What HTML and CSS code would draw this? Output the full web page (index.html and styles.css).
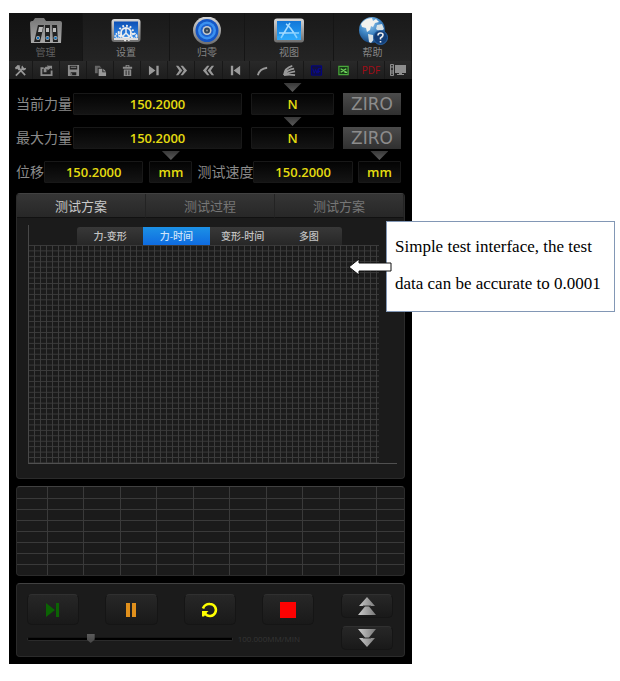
FILE: index.html
```html
<!DOCTYPE html>
<html lang="zh-CN">
<head>
<meta charset="utf-8">
<meta name="viewport" content="width=device-width, initial-scale=1">
<title>测试</title>
<link rel="stylesheet" href="styles.css">
</head>
<body>
<svg class="defs" aria-hidden="true">
  <defs>
    <linearGradient id="metal" x1="0" y1="0" x2="0" y2="1"><stop offset="0" stop-color="#d8d8d8"/><stop offset="1" stop-color="#6d6d6d"/></linearGradient>
    <linearGradient id="folder" x1="0" y1="0" x2="0" y2="1"><stop offset="0" stop-color="#777"/><stop offset="1" stop-color="#a8a8a8"/></linearGradient>
    <linearGradient id="blue" x1="0" y1="0" x2="0" y2="1"><stop offset="0" stop-color="#0b4fb5"/><stop offset="1" stop-color="#3b93ee"/></linearGradient>
    <linearGradient id="sky" x1="0" y1="0" x2="0" y2="1"><stop offset="0" stop-color="#1277d8"/><stop offset="1" stop-color="#25a4fa"/></linearGradient>
    <radialGradient id="globe" cx=".4" cy=".25" r=".8"><stop offset="0" stop-color="#9fd0f2"/><stop offset=".5" stop-color="#3f86c4"/><stop offset="1" stop-color="#123f78"/></radialGradient>
    <linearGradient id="silver" x1="0" y1="0" x2="1" y2="0"><stop offset="0" stop-color="#ccc"/><stop offset="1" stop-color="#777"/></linearGradient>
  </defs>
</svg>
<main class="page">
  <section class="app">
    <nav class="nav">
      <button class="nav-item active" type="button">
        <svg class="nav-icon" viewBox="0 0 34 28"><path d="M1 6q0-2 2-2h1l2-3h9l2 3h14q2 0 2 2l-1 20H2z" fill="url(#folder)"/><g fill="#222"><path d="M9 8h6l-4 17H5z"/><path d="M16 8h5v17h-5zM23 8h5l1 17h-5z"/></g><g fill="#bbb"><path d="M10 10h4l-1 5H9zM17 11h3v4h-3zM24 11h3v4h-3z"/></g><g fill="#bbb"><circle cx="9" cy="21" r="2"/><circle cx="18.500" cy="21" r="2"/><circle cx="26.500" cy="21" r="2"/></g><g fill="#1470b8"><circle cx="9" cy="21" r="1.300"/><circle cx="18.500" cy="21" r="1.300"/><circle cx="26.500" cy="21" r="1.300"/></g></svg>
        <span>管理</span>
      </button>
      <button class="nav-item" type="button">
        <svg class="nav-icon" viewBox="0 0 34 28"><rect x="2.500" y="2" width="29" height="23" rx="3" fill="url(#metal)"/><rect x="5" y="4.500" width="24" height="18" fill="url(#blue)"/><g fill="none" stroke="#eee"><circle cx="17" cy="16" r="5" stroke-width="1.800"/><circle cx="17" cy="16" r="7.300" stroke-width="2" stroke-dasharray="1.800 2"/><path d="M17 16v-5M17 16l-4 4M17 16l4 4" stroke-width="1.500"/><circle cx="9" cy="19" r="2.500" stroke-dasharray="1.500 .8" stroke-width="2"/><circle cx="25" cy="19" r="2.500" stroke-dasharray="1.500 .8" stroke-width="2"/></g><path d="M5 21h24v2H5z" fill="#ddd"/></svg>
        <span>设置</span>
      </button>
      <button class="nav-item" type="button">
        <svg class="nav-icon" viewBox="0 0 34 28"><circle cx="17" cy="13.500" r="14" fill="url(#metal)"/><circle cx="17" cy="13.500" r="11.500" fill="#1556c5"/><circle cx="17" cy="13.500" r="9" fill="#3b91f0"/><circle cx="17" cy="13.500" r="6.500" fill="#1d62cf"/><circle cx="17" cy="13.500" r="4.500" fill="#c8ccd0"/><circle cx="17" cy="13.500" r="3" fill="#34475a"/><circle cx="17" cy="13.500" r="1" fill="#999"/></svg>
        <span>归零</span>
      </button>
      <button class="nav-item" type="button">
        <svg class="nav-icon" viewBox="0 0 34 28"><rect x="2" y="1.500" width="30" height="24" rx="3" fill="url(#metal)"/><rect x="5" y="4" width="24" height="19" fill="url(#sky)"/><g fill="none" stroke="#a6dcff" stroke-width="1.500"><path d="M18 6L9 21M14 7q4 2 11 14M7 16h20"/></g><path d="M5 19l24-5v9H5z" fill="#45bbff" opacity=".3"/></svg>
        <span>视图</span>
      </button>
      <button class="nav-item" type="button">
        <svg class="nav-icon" viewBox="0 0 34 28"><circle cx="16" cy="13" r="13" fill="url(#globe)"/><path d="M5 7q4-6 11-6l1 3 3-2 3 3-4 1-2 4-2-1-1 4-3 2-1-4-4-1z" fill="#f2f2ee"/><path d="M21 8l5-1 2 5-4 3-4-3zM12 17l5 1 2 3-4 5-2-1z" fill="#d8e2e6"/><circle cx="24.500" cy="20.500" r="7" fill="#123e78" stroke="#2863a5"/><path d="M22 18.500q0-2.500 2.500-2.500t2.500 2q0 1.500-2.500 3v1.500M24.500 24v1.500" fill="none" stroke="#eee" stroke-width="1.600"/></svg>
        <span>帮助</span>
      </button>
    </nav>

    <div class="toolbar">
      <button type="button" aria-label="工具"><svg viewBox="0 0 14 14"><path d="M2 12.500L9.500 5M5 4.500l7 7.500" stroke="#999" stroke-width="1.800"/><path d="M1 4l3-3 3 1-1 1 1 2-2 2-1.500-2L2 6zM9 1.500l1 2 1.500 1L13 4q0 3-3 3L8 5q-.5-2.500 1-3.500z" fill="#999"/></svg></button>
      <button type="button" aria-label="打开"><svg viewBox="0 0 14 14"><path d="M4 4.500H1.500v7.500h11V7" stroke="#8c8c8c" stroke-width="2" fill="none"/><path d="M4 9V5l2-2h2V1l4 3-4 3V5.500H7V9zM9 2h4v4z" fill="#8c8c8c"/></svg></button>
      <button type="button" aria-label="保存"><svg viewBox="0 0 14 14"><path d="M1 1h12v12H1zM3 2v4h8V2zM4 9v3h6V9z" fill="#8c8c8c" fill-rule="evenodd"/><path d="M4 3.500h6M5 10v2" stroke="#8c8c8c"/></svg></button>
      <button type="button" aria-label="复制"><svg viewBox="0 0 14 14"><path d="M1 2h5l2 2H4v6H1z" fill="#666"/><path d="M5 5h4v4h4v4H5zM10 5l3 3h-3z" fill="#999"/></svg></button>
      <button type="button" aria-label="删除"><svg viewBox="0 0 14 14"><path d="M2 3h3V1h4v2h3v2H2zM6 2v1h2V2zM3 6h8v7H3z" fill="#8c8c8c" fill-rule="evenodd"/><path d="M5.500 7v5M8.500 7v5" stroke="#222"/></svg></button>
      <button type="button" aria-label="末尾"><svg viewBox="0 0 14 14"><path d="M1 2l7 5-7 5zM9 2h2.500v10H9z" fill="#999"/></svg></button>
      <button type="button" aria-label="快进"><svg viewBox="0 0 14 14"><path d="M1 2h2.500L8 7l-4.500 5H1l3.500-5zM6 2h2.500L13 7l-4.500 5H6l3.500-5z" fill="#999"/></svg></button>
      <button type="button" aria-label="快退"><svg viewBox="0 0 14 14"><path d="M13 2h-2.500L6 7l4.500 5H13L9.500 7zM8 2H5.500L1 7l4.500 5H8L4.500 7z" fill="#999"/></svg></button>
      <button type="button" aria-label="开头"><svg viewBox="0 0 14 14"><path d="M12 2L5 7l7 5zM2 2h2.500v10H2z" fill="#999"/></svg></button>
      <button type="button" aria-label="曲线"><svg viewBox="0 0 14 14"><path d="M2 12Q4 5 12 4" fill="none" stroke="#999" stroke-width="2"/></svg></button>
      <button type="button" aria-label="多曲线"><svg viewBox="0 0 14 14"><path d="M1 12Q2 4 10 2M1 12Q4 6 12 5M1 12Q6 9 13 8M1 12q6-1 12 0" fill="none" stroke="#999" stroke-width="2"/></svg></button>
      <button type="button" aria-label="Word"><svg viewBox="0 0 14 14"><path d="M1.500 2h11v10h-11z" fill="#101040" stroke="#00008c"/><path d="M3 5l1.500 5L6 6l1.500 4L9 5h3M9 5v5M9 8h2" fill="none" stroke="#0a0a90"/></svg></button>
      <button type="button" aria-label="Excel"><svg viewBox="0 0 14 14"><path d="M2 2.500h10v9H2z" fill="#173c17" stroke="#49a83a" stroke-width="1.300"/><path d="M4 5l6 4M10 5L4 9M8 9h3" stroke="#71d45d" stroke-width="1.300"/></svg></button>
      <button type="button" class="pdf">PDF</button>
      <button type="button" aria-label="联机"><svg class="wide" viewBox="0 0 18 14"><path d="M1.500 1.500h3v11h-3z" fill="#333" stroke="#8c8c8c"/><path d="M3 3v2M3 7v4" stroke="#999"/><path d="M6 2h11v8H6zM10 10h3v1h2v1H8v-1h2z" fill="#8c8c8c"/></svg></button>
    </div>

    <form class="readings">
      <div class="reading force">
        <label for="current">当前力量</label>
        <input id="current" value="150.2000" readonly>
        <span class="unit"><select aria-label="当前力量单位"><option>N</option></select></span>
        <button class="zero" type="button">ZIRO</button>
      </div>
      <div class="reading force">
        <label for="maximum">最大力量</label>
        <input id="maximum" value="150.2000" readonly>
        <span class="unit"><select aria-label="最大力量单位"><option>N</option></select></span>
        <button class="zero" type="button">ZIRO</button>
      </div>
      <div class="reading motion">
        <label for="shift">位移</label>
        <input id="shift" value="150.2000" readonly>
        <span class="unit"><select aria-label="位移单位"><option>mm</option></select></span>
        <label for="speed">测试速度</label>
        <input id="speed" value="150.2000" readonly>
        <span class="unit"><select aria-label="速度单位"><option>mm</option></select></span>
      </div>
    </form>

    <section class="panel">
      <div class="tabs">
        <button class="active" type="button">测试方案</button>
        <button type="button">测试过程</button>
        <button type="button">测试方案</button>
      </div>
      <div class="chart">
        <div class="chart-tabs">
          <button type="button">力-变形</button>
          <button class="active" type="button">力-时间</button>
          <button type="button">变形-时间</button>
          <button type="button">多图</button>
        </div>
        <div class="plot"></div>
      </div>
    </section>

    <section class="panel">
      <table class="results">
        <colgroup><col class="first"><col span="9"><col class="last"></colgroup>
        <tbody>
          <tr><td></td><td></td><td></td><td></td><td></td><td></td><td></td><td></td><td></td><td></td><td></td></tr>
          <tr><td></td><td></td><td></td><td></td><td></td><td></td><td></td><td></td><td></td><td></td><td></td></tr>
          <tr><td></td><td></td><td></td><td></td><td></td><td></td><td></td><td></td><td></td><td></td><td></td></tr>
          <tr><td></td><td></td><td></td><td></td><td></td><td></td><td></td><td></td><td></td><td></td><td></td></tr>
          <tr><td></td><td></td><td></td><td></td><td></td><td></td><td></td><td></td><td></td><td></td><td></td></tr>
          <tr><td></td><td></td><td></td><td></td><td></td><td></td><td></td><td></td><td></td><td></td><td></td></tr>
          <tr><td></td><td></td><td></td><td></td><td></td><td></td><td></td><td></td><td></td><td></td><td></td></tr>
          <tr><td></td><td></td><td></td><td></td><td></td><td></td><td></td><td></td><td></td><td></td><td></td></tr>
        </tbody>
      </table>
    </section>

    <section class="panel controls">
      <div class="run">
        <div class="run-buttons">
          <button type="button" aria-label="开始"><svg viewBox="0 0 16 16"><path d="M1 1l9 7-9 7zM11 1h3v14h-3z" fill="#0b6303"/></svg></button>
          <button type="button" aria-label="暂停"><svg viewBox="0 0 16 16"><path d="M3 1h4v14H3zM9 1h4v14H9z" fill="#e0901c"/></svg></button>
          <button type="button" aria-label="返回"><svg class="loop" viewBox="0 0 18 16"><path d="M2 6.500A6.500 6.500 0 0 1 9 2a6 6 0 1 1-5 9.500" fill="none" stroke="#ff0" stroke-width="2.600"/><path d="M1 9h6.500l-2 2L3 14.500H1z" fill="#ff0"/></svg></button>
          <button type="button" aria-label="停止"><svg viewBox="0 0 16 16"><path d="M0 0h16v16H0z" fill="#fd0202"/></svg></button>
        </div>
        <div class="speed">
          <input type="range" min="0" max="100" value="30" aria-label="速度">
          <span>100.000MM/MIN</span>
        </div>
      </div>
      <div class="jog">
        <button type="button" aria-label="上升"><svg viewBox="0 0 18 18"><path d="M9 0l8 9H1zM9 7l9 11H0z" fill="url(#silver)"/><path d="M5 9h8" stroke="#333"/></svg></button>
        <button type="button" aria-label="下降"><svg viewBox="0 0 18 18"><path d="M0 0h18L9 11zM1 9h16l-8 9z" fill="url(#silver)"/><path d="M5 9h8" stroke="#333"/></svg></button>
      </div>
    </section>
  </section>

  <aside class="callout">
    <svg class="arrow" viewBox="0 0 44 18"><path d="M1 9L11 1v4h32v8H11v4z" fill="#fff" stroke="#111"/></svg>
    <p>Simple test interface, the test data can be accurate to 0.0001</p>
  </aside>
</main>
</body>
</html>
```
FILE: styles.css
```css
* { box-sizing: border-box; }
body {
  margin: 0;
  background: #fff;
  font-family: "Open Sans", "Noto Sans CJK SC", sans-serif;
}
button, input, select { font: inherit; color: inherit; border: 0; padding: 0; margin: 0; min-width: 0; background: none; }
button svg { display: block; }
.defs { position: absolute; width: 0; height: 0; }

.page {
  display: grid;
  grid-template-columns: minmax(0, 403fr) minmax(0, 203fr);
  align-items: start;
  padding: 13px 5px 17px 9px;
}
.app { background: #000; padding-bottom: 7px; }

/* main navigation */
.nav { display: grid; grid-template-columns: 74fr 87fr 75fr 89fr 78fr; }
.nav-item {
  height: 48px;
  display: flex;
  flex-direction: column;
  align-items: center;
  padding-top: 4px;
  background: linear-gradient(#191919, #242424);
  border-right: 1px solid #151515;
  color: #858585;
  font-size: 10px;
  line-height: 14px;
}
.nav-item.active { background: linear-gradient(#121212, #191919); color: #606060; }
.nav-icon { width: 34px; height: 28px; }

.toolbar { display: grid; grid-template-columns: 24fr repeat(14, 27fr); }
.toolbar button {
  height: 18px;
  display: flex;
  align-items: center;
  justify-content: center;
  background: linear-gradient(#292929, #1d1d1d);
  border-right: 1px solid #181818;
}
.toolbar svg { width: 13px; height: 13px; fill: none; }
.toolbar .wide { width: 18px; height: 14px; }
.toolbar .pdf { color: #a30c16; font-size: 10px; }

/* readings */
.readings { display: grid; gap: 12px; padding: 14px 11px 10px 7px; }
.reading { display: grid; height: 22px; align-items: center; }
.force { grid-template-columns: 57px 169fr 9px 83fr 9px 58fr; }
.force .unit { grid-column: 4; }
.force .zero { grid-column: 6; }
.motion { grid-template-columns: 28px 99fr 6px 43fr 5px 56px 99fr 5px 43fr; }
.motion .unit { grid-column: 4; }
.motion label:nth-of-type(2) { grid-column: 6; }
.motion .unit:last-child { grid-column: 9; }
.reading label { color: #8a8a8a; font-size: 14px; line-height: 20px; white-space: nowrap; }
.reading input, .unit select {
  width: 100%;
  height: 22px;
  border: 1px solid #181818;
  border-radius: 1px;
  background: linear-gradient(#040404, #141414);
  color: #e4dc10;
  font-size: 13px;
  font-weight: 600;
  text-align: center;
  text-align-last: center;
}
.unit { position: relative; }
.unit select { display: block; appearance: none; }
.unit::before {
  content: "";
  position: absolute;
  left: calc(50% - 9px);
  top: -10px;
  width: 18px;
  height: 9px;
  background: linear-gradient(#383838, #5a5a5a);
  clip-path: polygon(0 0, 100% 0, 50% 100%);
}
.zero {
  height: 22px;
  background: linear-gradient(#4b4b4b, #303030);
  color: #8c8c8c;
  font-family: "DejaVu Sans", sans-serif;
  font-size: 17px;
  line-height: 22px;
}

/* panels */
.panel {
  margin: 0 7px;
  background: #1b1b1b;
  border: 1px solid #2b2b2b;
  border-top-color: #414141;
  border-radius: 4px;
  overflow: hidden;
}
.panel + .panel { margin-top: 7px; }
.tabs { display: grid; grid-template-columns: repeat(3, 1fr); }
.tabs button {
  height: 24px;
  background: linear-gradient(#353535, #272727);
  border-bottom: 1px solid #111;
  border-right: 1px solid #232323;
  color: #767676;
  font-size: 13px;
  line-height: 20px;
}
.tabs .active { color: #c8c8c8; }
.chart {
  margin: 7px 7px 14px 11px;
  padding-top: 2px;
  border-left: 1px solid #484848;
  border-bottom: 1px solid #505050;
}
.chart-tabs {
  display: grid;
  grid-template-columns: repeat(4, 1fr);
  margin: 0 55px 0 48px;
  border-radius: 3px 3px 0 0;
  overflow: hidden;
  background: linear-gradient(#383838, #272727);
}
.chart-tabs button { height: 18px; color: #c4c4c4; font-size: 10px; font-weight: 500; line-height: 16px; }
.chart-tabs .active { background: linear-gradient(#1c91e6, #0f6be0); color: #cfe4fa; }
.plot {
  height: 218px;
  margin-right: 18px;
  background:
    linear-gradient(90deg, transparent 5px, #3c3c3c 5px) 0 0 / 6px 100%,
    linear-gradient(#3c3c3c 1px, transparent 1px) 0 0 / 100% calc(100% / 40);
}

.results { width: 100%; border-collapse: collapse; table-layout: fixed; }
.results .first { width: 30px; }
.results .last { width: 28px; }
.results td { height: 11px; padding: 0; border: 1px solid #3a3a3a; }
.results tr:first-child td { border-top: 0; }
.results tr:last-child td { border-bottom: 0; }
.results td:first-child { border-left: 0; }
.results td:last-child { border-right: 0; }

/* machine controls */
.controls { display: grid; grid-template-columns: 287fr 52fr; gap: 27px; padding: 10px 11px 6px 10px; }
.run-buttons { display: grid; grid-template-columns: repeat(4, 52fr); gap: 26px; }
.run-buttons button, .jog button {
  display: flex;
  align-items: center;
  justify-content: center;
  border: 1px solid #151515;
  border-top-color: #303030;
  border-radius: 5px;
  background: linear-gradient(#272727, #191919);
}
.run-buttons button { height: 31px; }
.run-buttons svg { width: 16px; height: 16px; }
.run-buttons .loop { width: 18px; }
.jog { display: grid; gap: 8px; }
.jog button { height: 24px; }
.jog svg { width: 18px; height: 18px; }
.speed { display: flex; align-items: center; gap: 5px; margin-top: 7px; padding-right: 14px; color: #353535; font-size: 8px; line-height: 14px; }
.speed input { flex: 1; height: 14px; appearance: none; }
.speed input::-webkit-slider-runnable-track {
  height: 4px;
  border: 1px solid #2b2b2b;
  border-top-color: #151515;
  border-radius: 2px;
  background: #000;
}
.speed input::-webkit-slider-thumb {
  appearance: none;
  width: 8px;
  height: 9px;
  margin-top: -4px;
  background: linear-gradient(#5c5c5c, #454545);
  clip-path: polygon(0 0, 100% 0, 100% 60%, 50% 100%, 0 60%);
}

/* annotation */
.callout {
  position: relative;
  margin: 208px 0 0 -26px;
  padding: 6px 8px 9px;
  border: 1px solid #8297b5;
  background: #fff;
  color: #000;
  font: 17px/37px "Liberation Serif", serif;
}
.callout p { margin: 0; }
.arrow { position: absolute; left: -39px; top: 36px; width: 44px; height: 18px; }
```
